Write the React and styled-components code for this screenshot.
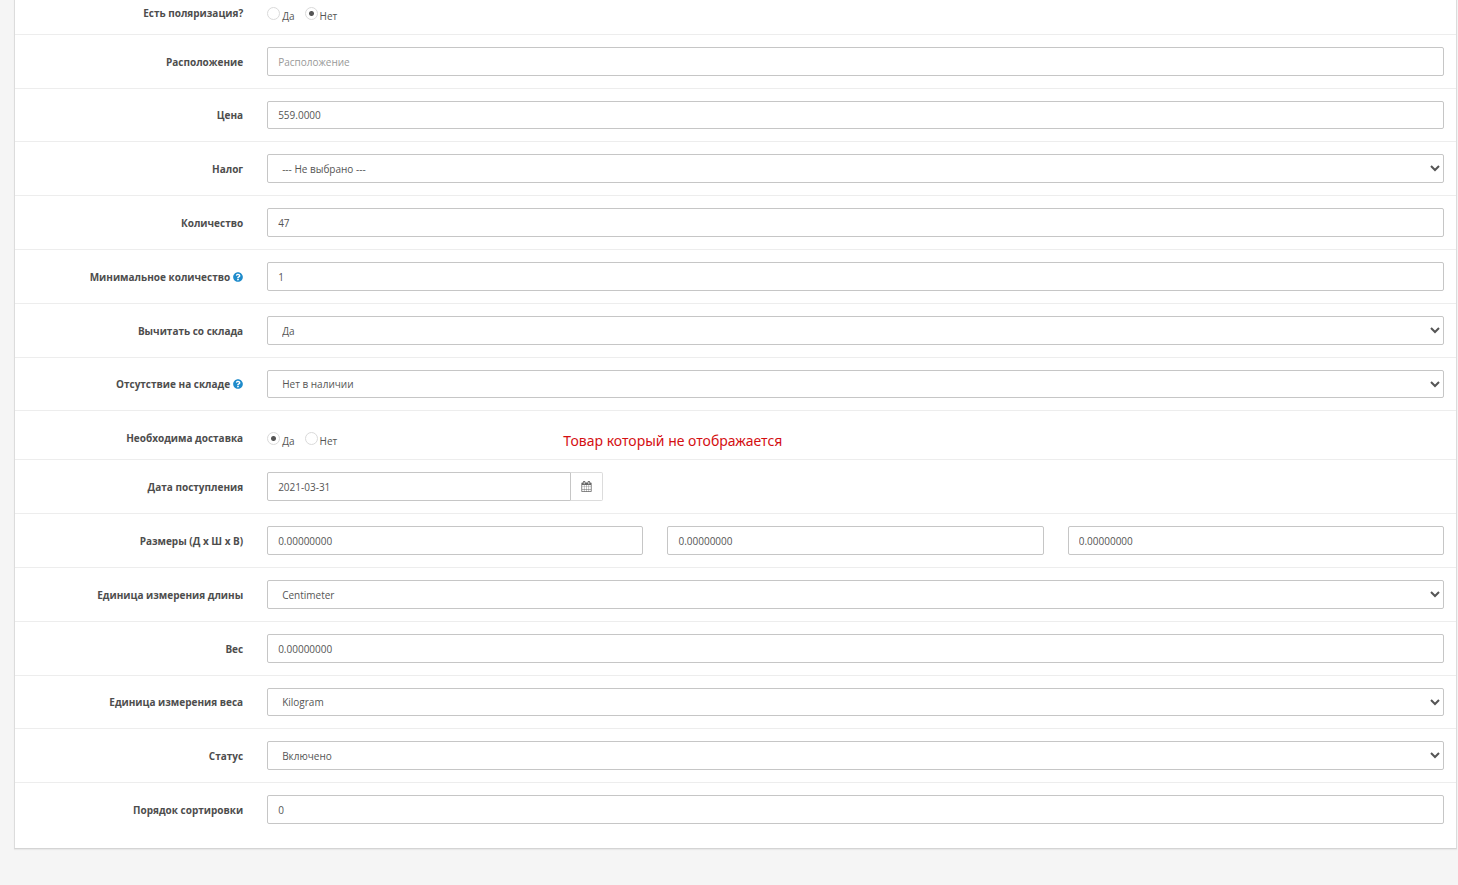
import React, { useState } from "react";
import styled, { createGlobalStyle } from "styled-components";
import { FaQuestionCircle } from "react-icons/fa";

const GlobalStyle = createGlobalStyle`
  * {
    box-sizing: border-box;
  }

  body {
    background: #f5f5f5;
    color: #555;
    font-family: "Open Sans", "Noto Sans", sans-serif;
    font-size: 10px;
    line-height: 14px;
    margin: 0;
  }
`;

const Page = styled.main`
  overflow: hidden;
  padding: 0 1px 36px 14px;
`;

const Panel = styled.form`
  background: white;
  border: 1px solid #dcdcdc;
  border-bottom-color: #d4d4d4;
  box-shadow: 0 1px 1px rgba(0, 0, 0, 0.05);
  margin-top: -15px;
  padding-bottom: 12px;
`;

const Row = styled.div`
  align-items: ${props => (props.$top ? "start" : "center")};
  display: grid;
  grid-template-columns: repeat(12, minmax(0, 1fr));
  padding: 12px 0;

  & + & {
    border-top: 1px solid #ededed;
  }
`;

const LabelCell = styled.div`
  align-items: center;
  color: #4d4d4d;
  display: flex;
  font-weight: bold;
  gap: 3px;
  grid-column: span 2;
  justify-content: flex-end;
  padding: ${props => (props.$top ? "8px 12px 0" : "0 12px")};
`;

const HelpIcon = styled(FaQuestionCircle)`
  color: #1e8bcb;
  height: 10px;
  width: 10px;
`;

const Cell = styled.div`
  display: flex;
  gap: 24px;
  grid-column: span ${props => props.$span || 10};
  padding: 0 12px;
`;

const Input = styled.input`
  background: white;
  border: 1px solid #c6c6c6;
  border-radius: ${props => (props.$grouped ? "2px 0 0 2px" : "2px")};
  color: #555;
  flex: 1;
  font: inherit;
  height: ${props => (props.$compact ? 28 : 29)}px;
  min-width: 0;
  padding: 0 10px;

  &::placeholder {
    color: #999;
  }
`;

const Select = styled.select`
  background: white;
  border: 1px solid #c6c6c6;
  border-radius: 2px;
  color: #555;
  flex: 1;
  font: inherit;
  height: ${props => (props.$compact ? 28 : 29)}px;
  min-width: 0;
  padding: 0 10px;
`;

const InputGroup = styled.div`
  display: flex;
  flex: 1;
`;

const DateButton = styled.button`
  align-items: center;
  background: white;
  border: 1px solid #dcdcdc;
  border-left: 0;
  border-radius: 0 2px 2px 0;
  color: #666;
  display: flex;
  height: 29px;
  justify-content: center;
  padding: 0;
  width: 32px;
`;

const RadioCell = styled(Cell)`
  gap: 10px;
  height: 24px;
  padding-top: 9px;
`;

const RadioLabel = styled.label`
  align-items: flex-end;
  display: flex;
  gap: 2px;
  height: 16px;
`;

const Radio = styled.input`
  align-self: flex-start;
  appearance: none;
  background: white;
  border: 1px solid #dadada;
  border-radius: 50%;
  height: 13px;
  margin: 0;
  width: 13px;

  &:checked {
    background: radial-gradient(circle, #555 0 2px, white 3px);
  }
`;

const Note = styled.span`
  color: #d40f12;
  font-family: "Noto Sans", sans-serif;
  font-size: 14px;
  line-height: 18px;
  margin-left: 216px;
  white-space: nowrap;
`;

const CalendarIcon = () => (
  <svg width="11" height="11" viewBox="0 0 1792 1792" fill="currentColor">
    <path d="M192 1664h288v-288h-288v288zM544 1664h320v-288h-320v288zM192 1312h288v-320h-288v320zM544 1312h320v-320h-320v320zM192 928h288v-288h-288v288zM928 1664h320v-288h-320v288zM544 928h320v-288h-320v288zM1312 1664h288v-288h-288v288zM928 1312h320v-320h-320v320zM576 480v-288q0-13-9.5-22.5t-22.5-9.5h-64q-13 0-22.5 9.5t-9.5 22.5v288q0 13 9.5 22.5t22.5 9.5h64q13 0 22.5-9.5t9.5-22.5zM1312 1312h288v-320h-288v320zM928 928h320v-288h-320v288zM1312 928h288v-288h-288v288zM1344 480v-288q0-13-9.5-22.5t-22.5-9.5h-64q-13 0-22.5 9.5t-9.5 22.5v288q0 13 9.5 22.5t22.5 9.5h64q13 0 22.5-9.5t9.5-22.5zM1728 384v1280q0 52-38 90t-90 38h-1408q-52 0-90-38t-38-90v-1280q0-52 38-90t90-38h128v-96q0-66 47-113t113-47h64q66 0 113 47t47 113v96h384v-96q0-66 47-113t113-47h64q66 0 113 47t47 113v96h128q52 0 90 38t38 90z" />
  </svg>
);

const TextRow = ({ id, label, help, value, placeholder, compact }) => (
  <Row>
    <LabelCell>
      <label htmlFor={id}>{label}</label>
      {help && <HelpIcon />}
    </LabelCell>
    <Cell>
      <Input
        id={id}
        type="text"
        defaultValue={value}
        placeholder={placeholder}
        $compact={compact}
      />
    </Cell>
  </Row>
);

const SelectRow = ({ id, label, help, options, compact }) => (
  <Row>
    <LabelCell>
      <label htmlFor={id}>{label}</label>
      {help && <HelpIcon />}
    </LabelCell>
    <Cell>
      <Select id={id} $compact={compact}>
        {options.map(option => (
          <option key={option}>{option}</option>
        ))}
      </Select>
    </Cell>
  </Row>
);

const RadioRow = ({ name, label, initial, children }) => {
  const [selected, setSelected] = useState(initial);

  return (
    <Row $top role="radiogroup" aria-labelledby={`${name}-label`}>
      <LabelCell $top id={`${name}-label`}>
        {label}
      </LabelCell>
      <RadioCell>
        {["Да", "Нет"].map(option => (
          <RadioLabel key={option}>
            <Radio
              type="radio"
              name={name}
              checked={selected === option}
              onChange={() => setSelected(option)}
            />
            {option}
          </RadioLabel>
        ))}
        {children}
      </RadioCell>
    </Row>
  );
};

const App = () => (
  <>
    <GlobalStyle />
    <Page>
      <Panel>
        <RadioRow name="polarization" label="Есть поляризация?" initial="Нет" />
        <TextRow id="location" label="Расположение" placeholder="Расположение" />
        <TextRow id="price" label="Цена" value="559.0000" compact />
        <SelectRow id="tax" label="Налог" options={["--- Не выбрано ---"]} />
        <TextRow id="quantity" label="Количество" value="47" />
        <TextRow id="minimum" label="Минимальное количество" value="1" help />
        <SelectRow
          id="subtract"
          label="Вычитать со склада"
          options={["Да", "Нет"]}
        />
        <SelectRow
          id="stock-status"
          label="Отсутствие на складе"
          options={["Нет в наличии"]}
          help
          compact
        />
        <RadioRow name="shipping" label="Необходима доставка" initial="Да">
          <Note>Товар который не отображается</Note>
        </RadioRow>
        <Row>
          <LabelCell>
            <label htmlFor="date">Дата поступления</label>
          </LabelCell>
          <Cell $span={3}>
            <InputGroup>
              <Input id="date" type="text" defaultValue="2021-03-31" $grouped />
              <DateButton type="button" aria-label="Выбрать дату">
                <CalendarIcon />
              </DateButton>
            </InputGroup>
          </Cell>
        </Row>
        <Row>
          <LabelCell>
            <label htmlFor="length">Размеры (Д x Ш x В)</label>
          </LabelCell>
          <Cell>
            <Input id="length" type="text" defaultValue="0.00000000" />
            <Input aria-label="Ширина" type="text" defaultValue="0.00000000" />
            <Input aria-label="Высота" type="text" defaultValue="0.00000000" />
          </Cell>
        </Row>
        <SelectRow
          id="length-class"
          label="Единица измерения длины"
          options={["Centimeter"]}
        />
        <TextRow id="weight" label="Вес" value="0.00000000" />
        <SelectRow
          id="weight-class"
          label="Единица измерения веса"
          options={["Kilogram"]}
          compact
        />
        <SelectRow id="status" label="Статус" options={["Включено"]} />
        <TextRow id="sort-order" label="Порядок сортировки" value="0" />
      </Panel>
    </Page>
  </>
);

export default App;
